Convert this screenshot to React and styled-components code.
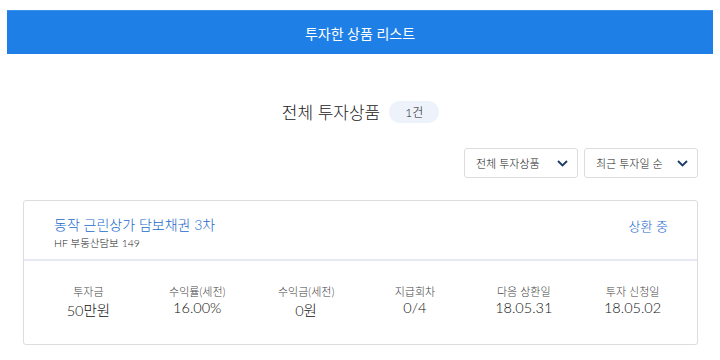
import styled, { createGlobalStyle } from "styled-components"

const GlobalStyle = createGlobalStyle`
    body {
        margin: 0;
        background: #FFFFFF;
        font-family: Lato, "Noto Sans CJK KR", sans-serif;
        font-weight: 400;
        color: #333333;
    }
`

const stats = [
    { label: "투자금", value: "50만원" },
    { label: "수익률(세전)", value: "16.00%" },
    { label: "수익금(세전)", value: "0원" },
    { label: "지급회차", value: "0/4" },
    { label: "다음 상환일", value: "18.05.31" },
    { label: "투자 신청일", value: "18.05.02" },
]

function Chevron() {
    return (
        <svg width="11" height="7" viewBox="0 0 11 7">
            <path d="M1 1 L5.5 5.5 L10 1" fill="none" stroke="#1B3A66" strokeWidth="1.8" />
        </svg>
    )
}

export default function App() {
    return (
        <>
            <GlobalStyle />
            <Page>
                <TopBar>투자한 상품 리스트</TopBar>
                <Content>
                    <Heading>
                        <h2>전체 투자상품</h2>
                        <Badge>1건</Badge>
                    </Heading>
                    <Filters>
                        <Select>
                            <span>전체 투자상품</span>
                            <Chevron />
                        </Select>
                        <Select>
                            <span>최근 투자일 순</span>
                            <Chevron />
                        </Select>
                    </Filters>
                    <Card>
                        <CardHead>
                            <div>
                                <ProductName>동작 근린상가 담보채권 3차</ProductName>
                                <ProductCode>HF 부동산담보 149</ProductCode>
                            </div>
                            <Status>상환 중</Status>
                        </CardHead>
                        <StatRow>
                            {stats.map((s) => (
                                <Stat key={s.label}>
                                    <span>{s.label}</span>
                                    <strong>{s.value}</strong>
                                </Stat>
                            ))}
                        </StatRow>
                    </Card>
                </Content>
            </Page>
        </>
    )
}

const Page = styled.div`
    padding: 10px 7px 0;
`

const TopBar = styled.div`
    height: 44px;
    background: #1E80E6;
    border-top: 1px solid #3A8FEA;
    box-sizing: border-box;
    display: flex;
    align-items: center;
    justify-content: center;
    color: #FFFFFF;
    font-size: 14px;
`

const Content = styled.div`
    width: 675px;
    margin: 0 auto;
    padding-left: 1px;
`

const Heading = styled.div`
    margin-top: 45px;
    display: flex;
    align-items: center;
    justify-content: center;
    gap: 9px;
    h2 {
        margin: 0;
        font-size: 17px;
        font-weight: 300;
        color: #222222;
    }
`

const Badge = styled.span`
    width: 50px;
    height: 22px;
    border-radius: 11px;
    background: #EEF3FB;
    display: flex;
    align-items: center;
    justify-content: center;
    font-size: 12px;
    font-weight: 300;
    color: #222222;
`

const Filters = styled.div`
    margin-top: 24px;
    display: flex;
    justify-content: flex-end;
    gap: 6px;
`

const Select = styled.div`
    width: 114px;
    height: 30px;
    box-sizing: border-box;
    border: 1px solid #DDDDDD;
    border-radius: 3px;
    display: flex;
    align-items: center;
    justify-content: space-between;
    padding: 0 9px 0 11px;
    font-size: 11px;
    font-weight: 300;
    color: #222222;
`

const Card = styled.div`
    margin-top: 22px;
    border: 1px solid #DDDDDD;
    border-radius: 3px;
    box-shadow: 0 1px 1px rgba(0, 0, 0, 0.06);
`

const CardHead = styled.div`
    height: 60px;
    box-sizing: border-box;
    border-bottom: 2px solid #E6EAF0;
    display: flex;
    justify-content: space-between;
    align-items: flex-start;
    padding: 15px 29px 0 30px;
`

const ProductName = styled.div`
    font-size: 14px;
    font-weight: 300;
    color: #1A6ACB;
    line-height: 18px;
`

const ProductCode = styled.div`
    font-size: 10.5px;
    font-weight: 300;
    color: #222222;
    margin-top: 1px;
`

const Status = styled.div`
    font-size: 13px;
    font-weight: 300;
    color: #1A6ACB;
`

const StatRow = styled.div`
    display: grid;
    grid-template-columns: repeat(6, 1fr);
    padding: 22px 10px 24px;
`

const Stat = styled.div`
    display: flex;
    flex-direction: column;
    align-items: center;
    span {
        font-size: 11px;
        font-weight: 300;
        color: #444444;
    }
    strong {
        font-weight: 300;
        font-size: 14.5px;
        color: #111111;
    }
`
